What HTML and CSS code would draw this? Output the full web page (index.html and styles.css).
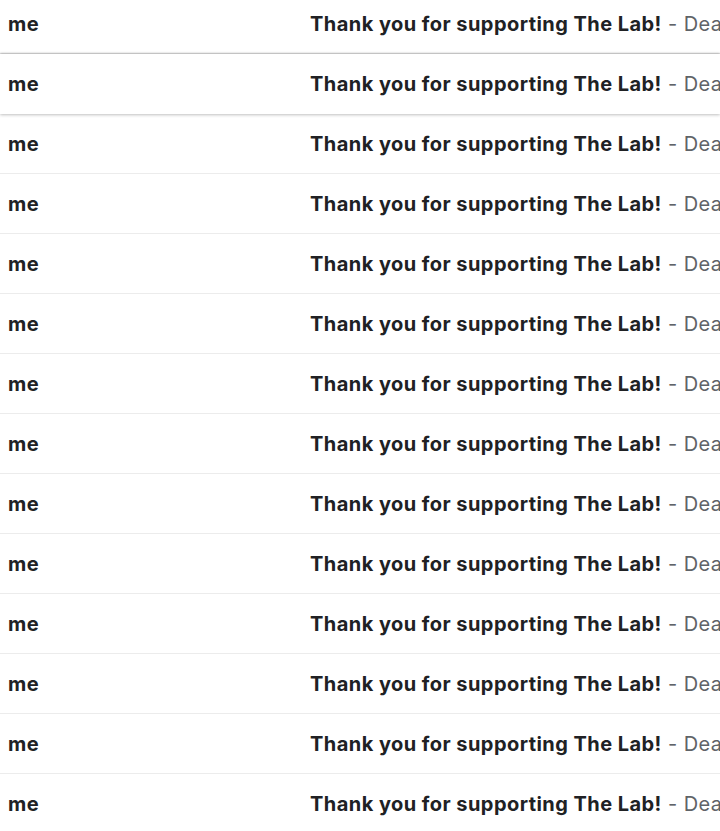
FILE: index.html
```html
<!DOCTYPE html>
<html>
<head>
<meta charset="utf-8">
<link rel="stylesheet" href="styles.css">
</head>
<body>
<div class="list">
  <div class="row"><span class="from">me</span><span class="msg"><b class="subj">Thank you for supporting The Lab!</b><span class="snip"> - Dear supporter, thank you</span></span></div>
  <div class="row hover"><span class="from">me</span><span class="msg"><b class="subj">Thank you for supporting The Lab!</b><span class="snip"> - Dear supporter, thank you</span></span></div>
  <div class="row"><span class="from">me</span><span class="msg"><b class="subj">Thank you for supporting The Lab!</b><span class="snip"> - Dear supporter, thank you</span></span></div>
  <div class="row"><span class="from">me</span><span class="msg"><b class="subj">Thank you for supporting The Lab!</b><span class="snip"> - Dear supporter, thank you</span></span></div>
  <div class="row"><span class="from">me</span><span class="msg"><b class="subj">Thank you for supporting The Lab!</b><span class="snip"> - Dear supporter, thank you</span></span></div>
  <div class="row"><span class="from">me</span><span class="msg"><b class="subj">Thank you for supporting The Lab!</b><span class="snip"> - Dear supporter, thank you</span></span></div>
  <div class="row"><span class="from">me</span><span class="msg"><b class="subj">Thank you for supporting The Lab!</b><span class="snip"> - Dear supporter, thank you</span></span></div>
  <div class="row"><span class="from">me</span><span class="msg"><b class="subj">Thank you for supporting The Lab!</b><span class="snip"> - Dear supporter, thank you</span></span></div>
  <div class="row"><span class="from">me</span><span class="msg"><b class="subj">Thank you for supporting The Lab!</b><span class="snip"> - Dear supporter, thank you</span></span></div>
  <div class="row"><span class="from">me</span><span class="msg"><b class="subj">Thank you for supporting The Lab!</b><span class="snip"> - Dear supporter, thank you</span></span></div>
  <div class="row"><span class="from">me</span><span class="msg"><b class="subj">Thank you for supporting The Lab!</b><span class="snip"> - Dear supporter, thank you</span></span></div>
  <div class="row"><span class="from">me</span><span class="msg"><b class="subj">Thank you for supporting The Lab!</b><span class="snip"> - Dear supporter, thank you</span></span></div>
  <div class="row"><span class="from">me</span><span class="msg"><b class="subj">Thank you for supporting The Lab!</b><span class="snip"> - Dear supporter, thank you</span></span></div>
  <div class="row"><span class="from">me</span><span class="msg"><b class="subj">Thank you for supporting The Lab!</b><span class="snip"> - Dear supporter, thank you</span></span></div>
</div>
</body>
</html>
```
FILE: styles.css
```css
html, body {
  margin: 0;
  padding: 0;
  background: #fff;
  overflow: hidden;
  height: 831px;
}
.list {
  margin-top: -6px;
  font-family: "Inter", "Open Sans", sans-serif;
  color: #202124;
}
.row {
  display: flex;
  align-items: center;
  height: 59px;
  border-bottom: 1px solid #ececec;
  white-space: nowrap;
  overflow: hidden;
  position: relative;
  background: #fff;
}
.row.hover {
  box-shadow: 0 -1px 2px rgba(0,0,0,0.2), 0 1px 3px rgba(0,0,0,0.24);
  z-index: 1;
  border-bottom-color: transparent;
}
.from {
  width: 302px;
  padding-left: 8px;
  font-size: 20px;
  font-weight: 700;
  letter-spacing: 0.4px;
  flex: none;
}
.msg {
  font-size: 20px;
  letter-spacing: 0.45px;
}
.subj {
  font-weight: 700;
}
.snip {
  color: #5f6368;
  font-weight: 400;
}
```
